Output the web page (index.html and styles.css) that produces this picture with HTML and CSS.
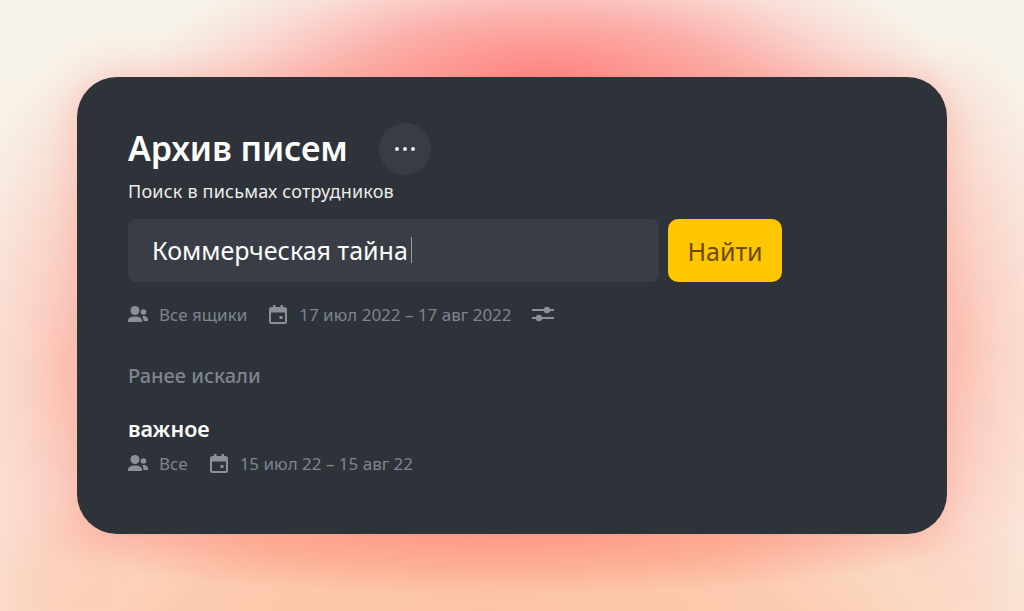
FILE: index.html
```html
<!DOCTYPE html>
<html lang="ru">
<head>
<meta charset="utf-8">
<title>Архив писем</title>
<link rel="stylesheet" href="styles.css">
</head>
<body>
<main class="page">
  <section class="card">
    <div class="head">
      <h1 class="title">Архив писем</h1>
      <button class="more" aria-label="Ещё">
        <svg width="22" height="6" viewBox="0 0 22 6"><circle cx="3" cy="3" r="2" fill="#e8e9ea"/><circle cx="11" cy="3" r="2" fill="#e8e9ea"/><circle cx="19" cy="3" r="2" fill="#e8e9ea"/></svg>
      </button>
    </div>
    <p class="sub">Поиск в письмах сотрудников</p>
    <div class="search">
      <div class="field"><span>Коммерческая тайна</span><i class="caret"></i></div>
      <button class="find">Найти</button>
    </div>
    <div class="meta">
      <span class="item">
        <svg class="ic" viewBox="0 0 20 20"><use href="#people"/></svg>Все ящики
      </span>
      <span class="item">
        <svg class="ic" viewBox="0 0 20 20"><use href="#cal"/></svg>17 июл 2022 – 17 авг 2022
      </span>
      <svg class="ic" viewBox="0 0 24 20"><path d="M1 6h22M1 14h22" stroke="#8a8f99" stroke-width="2" fill="none"/><circle cx="16" cy="6" r="3.200" fill="#8a8f99"/><circle cx="8" cy="14" r="3.200" fill="#8a8f99"/></svg>
    </div>
    <h2 class="recent">Ранее искали</h2>
    <div class="query">важное</div>
    <div class="meta small">
      <span class="item">
        <svg class="ic" viewBox="0 0 20 20"><use href="#people"/></svg>Все
      </span>
      <span class="item">
        <svg class="ic" viewBox="0 0 20 20"><use href="#cal"/></svg>15 июл 22 – 15 авг 22
      </span>
    </div>
  </section>
</main>
<svg class="defs" width="0" height="0" aria-hidden="true">
  <defs>
    <g id="people" fill="#8a8f99">
      <circle cx="7" cy="6.500" r="4.500"/>
      <path d="M0 18v-1.500c0-2.500 3-4 7-4s7 1.500 7 4V18z"/>
      <circle cx="15.500" cy="8" r="2.800"/>
      <path d="M14 12c3.500-.5 6 .8 6 3.500V17h-4.500c0-2-.5-3.800-1.500-5z"/>
    </g>
    <g id="cal">
      <rect x="2" y="4" width="16" height="15" rx="1.500" fill="none" stroke="#8a8f99" stroke-width="2"/>
      <path d="M2 4h16v4.500H2zM5 1h2.500v4H5zM12.500 1H15v4h-2.500zM11.500 12h3v3h-3z" fill="#8a8f99"/>
    </g>
  </defs>
</svg>
</body>
</html>
```
FILE: styles.css
```css
* { box-sizing: border-box; }
html, body { margin: 0; height: 100%; }
body {
  overflow: hidden;
  font-family: "Noto Sans", "Liberation Sans", sans-serif;
  background:
    radial-gradient(ellipse 400px 135px at 545px 77px, rgba(255,128,126,.95) 0%, rgba(255,132,130,.6) 45%, rgba(255,140,135,.2) 78%, rgba(255,140,135,0) 100%),
    radial-gradient(ellipse 100px 300px at 60px 370px, rgba(255,170,155,.55) 0%, rgba(255,170,155,.3) 50%, rgba(255,170,155,0) 100%),
    radial-gradient(ellipse 100px 300px at 964px 340px, rgba(255,170,155,.55) 0%, rgba(255,170,155,.3) 50%, rgba(255,170,155,0) 100%),
    radial-gradient(ellipse 470px 62px at 500px 534px, rgba(255,150,128,.8) 0%, rgba(255,154,133,.5) 55%, rgba(255,154,133,0) 100%),
    radial-gradient(ellipse 600px 190px at 480px 625px, #fcc3a5 0%, rgba(252,199,170,.9) 50%, rgba(252,201,172,0) 100%),
    linear-gradient(180deg, #f7f3ea 0%, #f8f0e6 40%, #fae8da 100%);
}
.page { width: 1024px; height: 611px; padding: 77px; }
.card {
  width: 870px;
  height: 457px;
  padding: 46px 51px;
  background: #2e3239;
  border-radius: 40px;
  color: #fff;
  box-shadow: 0 0 38px 4px rgba(255, 130, 120, .42);
}
.head { display: flex; align-items: center; gap: 31px; height: 52px; }
.title { margin: 0 0 3px; font-size: 34px; font-weight: 600; line-height: 48px; letter-spacing: -.1px; }
.more {
  width: 52px; height: 52px; border: 0; padding: 0; border-radius: 50%;
  background: #383c44; display: flex; align-items: center; justify-content: center;
}
.sub { margin: 4px 0 0; font-size: 18px; line-height: 24px; color: #eceded; letter-spacing: .2px; }
.search { display: flex; gap: 9px; margin-top: 16px; }
.field {
  width: 531px; height: 63px; padding-left: 24px; padding-bottom: 2px; border-radius: 8px;
  background: #393d46; display: flex; align-items: center;
  font-size: 25px; color: #fff;
}
.caret { width: 1px; height: 26px; margin-left: 3px; background: #9a9da3; }
.find {
  width: 114px; height: 63px; border: 0; border-radius: 10px; padding: 0;
  background: #ffc700; color: #6b4a06; font: inherit; font-size: 25px;
}
.meta { display: flex; align-items: center; gap: 21px; margin-top: 20px; height: 24px; color: #7f848e; font-size: 17px; }
.item { display: flex; align-items: center; gap: 11px; }
.ic { width: 20px; height: 20px; flex: none; }
.meta > .ic { width: 24px; margin-left: -2px; }
.recent { margin: 37px 0 0; height: 26px; font-size: 20px; line-height: 26px; font-weight: 500; color: #7f848e; }
.query { margin-top: 27px; font-size: 21.500px; line-height: 26px; font-weight: 600; }
.meta.small { margin-top: 9px; }
.defs { position: absolute; }
```
